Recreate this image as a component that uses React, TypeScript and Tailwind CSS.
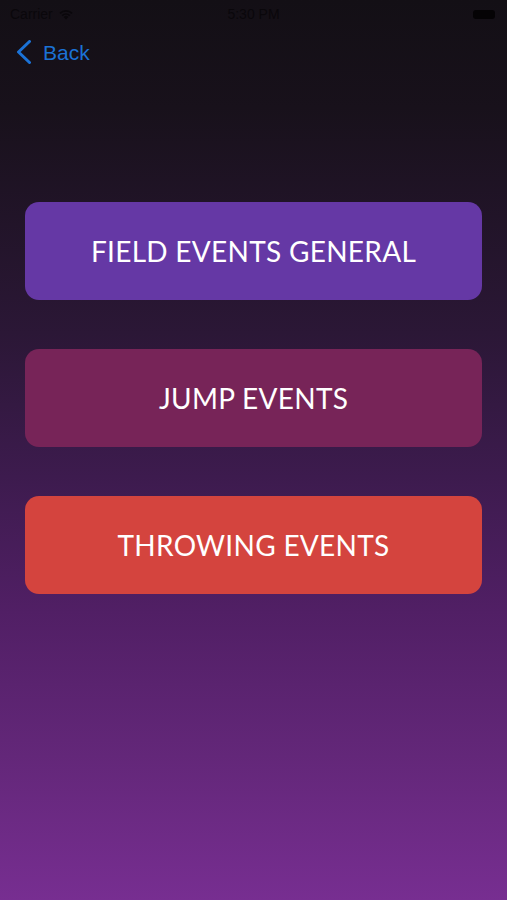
const events = [
  { label: 'FIELD EVENTS GENERAL', color: 'bg-[#6538a5]' },
  { label: 'JUMP EVENTS', color: 'bg-[#772458]' },
  { label: 'THROWING EVENTS', color: 'bg-[#d4443e]' },
];

function StatusBar() {
  return (
    <div className="relative flex h-[28px] items-center justify-between px-[10px] text-[14px] text-[#0a070b] font-['Liberation_Sans',sans-serif]">
      <div className="flex items-center gap-[5px]">
        <span>Carrier</span>
        <svg width="16" height="12" viewBox="0 0 16 12" fill="#0a070b">
          <path d="M8 11.5 5.6 9a3.4 3.4 0 0 1 4.8 0L8 11.5Z" />
          <path d="M3.6 7a6.2 6.2 0 0 1 8.8 0l-1.2 1.2a4.5 4.5 0 0 0-6.4 0L3.6 7Z" />
          <path d="M1.4 4.8a9.3 9.3 0 0 1 13.2 0l-1.2 1.2a7.6 7.6 0 0 0-10.8 0L1.4 4.8Z" />
        </svg>
      </div>
      <span className="absolute left-1/2 -translate-x-1/2">5:30 PM</span>
      <div className="mr-[2px] h-[9px] w-[22px] rounded-[3px] bg-[#050305]" />
    </div>
  );
}

export default function App() {
  return (
    <div className="flex h-[900px] w-full flex-col bg-[linear-gradient(180deg,#130f15_0%,#18111b_12%,#2b1736_37%,#3d1b4e_53%,#511f65_68%,#632779_84%,#772e91_100%)] font-['Lato','Noto_Sans',sans-serif]">
      <StatusBar />

      <button className="mt-[12px] flex w-fit items-center gap-[11px] pl-[16px] text-[21px] leading-none text-[#1b72d6] font-['Liberation_Sans',sans-serif]">
        <svg width="16" height="24" viewBox="0 0 16 24" fill="none" stroke="#1b72d6" strokeWidth="3" strokeLinecap="round" strokeLinejoin="round">
          <path d="M13.5 1.5 2.5 12l11 10.5" />
        </svg>
        <span>Back</span>
      </button>

      <div className="mt-[138px] flex flex-col gap-[49px] px-[25px]">
        {events.map((event) => (
          <button
            key={event.label}
            className={`flex h-[98px] items-center justify-center rounded-[14px] text-[28px] tracking-[0.3px] text-white ${event.color}`}
          >
            {event.label}
          </button>
        ))}
      </div>
    </div>
  );
}
